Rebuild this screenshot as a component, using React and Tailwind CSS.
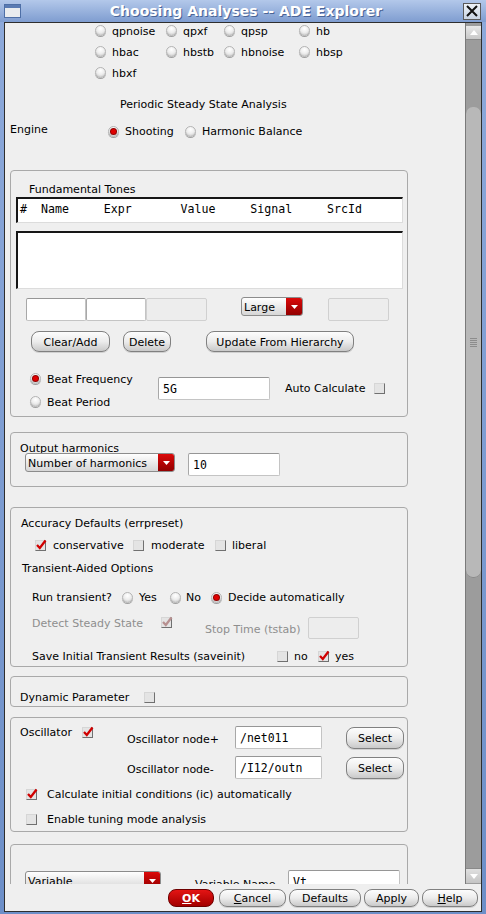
import React from 'react'

const mono = "font-['DejaVu_Sans_Mono',monospace]"
// labels sit a little low in the original toolkit
const lbl = 'pt-[3px]'

function Radio({ on }) {
  return (
    <span className="flex items-center justify-center w-[11px] h-[11px] shrink-0 rounded-full border border-[#b4b4b4] bg-[radial-gradient(circle_at_50%_30%,#ffffff_0%,#ededed_50%,#bcbcbc_100%)] shadow-[0_1px_0_#a0a0a0]">
      {on && <span className="w-[5px] h-[5px] rounded-full bg-[#e00000] shadow-[0_0_0_1px_#900000]" />}
    </span>
  )
}

function Check({ on, dim }) {
  return (
    <span className="relative flex w-[11px] h-[11px] shrink-0 border border-[#d6d6d6] border-b-[#707070] border-r-[#707070] bg-[#e4e4e4]">
      {on && (
        <svg viewBox="0 0 12 12" className="absolute -left-[1px] -top-[2px] w-[12px] h-[12px]">
          <path d="M2 6 L4.8 9 L10.5 1.5" fill="none" stroke={dim ? '#b79090' : '#d00000'} strokeWidth="2.3" />
        </svg>
      )}
    </span>
  )
}

function Btn({ className = '', children }) {
  return (
    <span className={`flex items-center justify-center shrink-0 rounded-[8px] border border-[#808080] bg-gradient-to-b from-[#fdfdfd] via-[#ececec] to-[#c9c9c9] shadow-[0_1px_0_#d0d0d0] ${className}`}>
      <span className={lbl}>{children}</span>
    </span>
  )
}

function Combo({ label, className = '' }) {
  return (
    <span className={`flex items-stretch shrink-0 h-[19px] rounded-[3px] border border-[#8c8c8c] overflow-hidden bg-gradient-to-b from-[#ffffff] to-[#d6d6d6] ${className}`}>
      <span className="flex-1 pl-[2px] pt-[2px] leading-[15px]">{label}</span>
      <span className="w-[16px] flex items-center justify-center bg-gradient-to-b from-[#dc0a0a] to-[#920000]">
        <svg width="7" height="4" viewBox="0 0 7 4"><path d="M0 0h7L3.5 4z" fill="#fff" /></svg>
      </span>
    </span>
  )
}

function Field({ value, className = '', disabled }) {
  return (
    <span
      className={`flex items-center shrink-0 rounded-[2px] border pl-[4px] pt-[3px] ${mono} text-[11.5px] ${
        disabled ? 'bg-[#ededed] border-[#d0d0d0]' : 'bg-white border-[#c4c4c4] border-t-[#969696] border-l-[#a8a8a8]'
      } ${className}`}
    >
      {value}
    </span>
  )
}

function Panel({ className = '', children }) {
  return (
    <div className={`ml-[5px] w-[398px] shrink-0 rounded-[4px] border border-[#a9a9a9] ${className}`}>
      {children}
    </div>
  )
}

const analyses = ['qpnoise', 'qpxf', 'qpsp', 'hb', 'hbac', 'hbstb', 'hbnoise', 'hbsp', 'hbxf']

function Scrollbar() {
  return (
    <div className="w-[16px] shrink-0 flex flex-col bg-[#9c9c9c] border-l border-[#7a7a7a]">
      <div className="mt-[3px] h-[14px] flex items-center justify-center bg-gradient-to-b from-[#e8e8e8] to-[#c8c8c8] border-b border-[#8a8a8a]">
        <svg width="8" height="5" viewBox="0 0 8 5"><path d="M4 0L8 5H0z" fill="#fff" /></svg>
      </div>
      <div className="mt-[67px] h-[471px] rounded-[7px] bg-[#b8b8b8] shadow-[inset_0_-1px_0_#8a8a8a] flex items-center justify-center">
        <div className="flex flex-col gap-[1px]">
          {[0, 1, 2, 3, 4].map((i) => (
            <span key={i} className="block w-[7px] h-px bg-[#8c8c8c]" />
          ))}
        </div>
      </div>
      <div className="mt-auto mb-[1px] h-[15px] flex items-center justify-center bg-gradient-to-b from-[#e0e0e0] to-[#c4c4c4] border-t border-[#8a8a8a]">
        <svg width="8" height="5" viewBox="0 0 8 5"><path d="M0 0H8L4 5z" fill="#fff" /></svg>
      </div>
    </div>
  )
}

export default function App() {
  return (
    <div className="w-[486px] h-[914px] flex flex-col bg-gradient-to-b from-[#8eaadb] to-[#6d8fc8] font-['DejaVu_Sans',sans-serif] text-[11px] text-black overflow-hidden">

      {/* ── Title bar ─────────────────────────────────────────── */}
      <div className="h-[22px] shrink-0 flex items-center bg-gradient-to-b from-[#b3c8ea] to-[#7f9dd0]">
        <div className="ml-[4px] w-[17px] h-[14px] flex flex-col border border-[#4e6fa6] bg-[#e9ecef]">
          <span className="h-[3px] bg-[#5a7bb3]" />
        </div>
        <div className="flex-1 text-center font-bold text-[14px] text-white [text-shadow:1px_1px_0_#4a6496] pl-[8px]">
          Choosing Analyses -- ADE Explorer
        </div>
        <div className="mr-[5px] w-[18px] h-[17px] flex items-center justify-center border border-[#5a5a5a] bg-gradient-to-b from-[#eef2f7] to-[#c9d4e3]">
          <svg width="12" height="12" viewBox="0 0 12 12">
            <path d="M1 1L11 11M11 1L1 11" stroke="#111" strokeWidth="2" />
          </svg>
        </div>
      </div>

      {/* ── Dialog body ───────────────────────────────────────── */}
      <div className="ml-[4px] w-[478px] h-[890px] flex flex-col border border-[#2e2e2e] bg-[#efefef]">
        <div className="h-[861px] flex">
          <div className="w-[460px] h-full overflow-hidden flex flex-col">

            {/* analyses list */}
            <div className="-mt-[3px] pl-[90px] grid grid-cols-[71px_58px_75px_60px] auto-rows-[21px]">
              {analyses.map((n) => (
                <div key={n} className="flex items-center gap-[6px]">
                  <Radio />
                  <span className={lbl}>{n}</span>
                </div>
              ))}
            </div>
            <div className="mt-[2px] h-px w-[410px] bg-[#a8a8a8]" />

            <div className="mt-[13px] pl-[115px] leading-[14px]">Periodic Steady State Analysis</div>

            <div className="mt-[8px] h-[18px] flex items-start">
              <span className="pl-[5px] pt-[2px] w-[103px] leading-[16px]">Engine</span>
              <div className="mt-[3px] h-[16px] flex items-center">
                <div className="w-[77px] flex items-center gap-[6px]">
                  <Radio on />
                  <span className={lbl}>Shooting</span>
                </div>
                <div className="flex items-center gap-[6px]">
                  <Radio />
                  <span className={lbl}>Harmonic Balance</span>
                </div>
              </div>
            </div>

            {/* Fundamental tones */}
            <Panel className="mt-[32px] h-[247px]">
              <div className="mt-[12px] pl-[18px] h-[14px] leading-[14px]">Fundamental Tones</div>
              <div className={`ml-[5px] w-[387px] h-[26px] bg-white border-t-2 border-l-2 border-[#161616] border-r border-b border-r-[#dcdcdc] border-b-[#dcdcdc] pl-[2px] pt-[3px] leading-[14px] ${mono} text-[11.6px] whitespace-pre`}>
                {'#  Name     Expr       Value     Signal     SrcId'}
              </div>
              <div className="mt-[8px] ml-[5px] w-[387px] h-[58px] bg-white border-t-2 border-l-2 border-[#161616] border-r border-b border-r-[#dcdcdc] border-b-[#dcdcdc]" />

              <div className="mt-[9px] ml-[15px] h-[23px] flex items-start">
                <Field className="w-[60px] h-[23px]" />
                <Field className="w-[60px] h-[23px]" />
                <Field className="w-[61px] h-[23px]" disabled />
                <Combo label="Large" className="ml-[34px] -mt-[1px] w-[62px]" />
                <Field className="ml-[25px] w-[61px] h-[23px]" disabled />
              </div>

              <div className="mt-[10px] h-[21px] flex">
                <Btn className="ml-[20px] w-[79px] h-[21px]">Clear/Add</Btn>
                <Btn className="ml-[13px] w-[48px] h-[21px]">Delete</Btn>
                <Btn className="ml-[35px] w-[148px] h-[21px]">Update From Hierarchy</Btn>
              </div>

              <div className="mt-[15px] flex items-start">
                <div className="w-[147px] pl-[19px] flex flex-col">
                  <div className="h-[23px] flex items-center gap-[6px]">
                    <Radio on />
                    <span className={lbl}>Beat Frequency</span>
                  </div>
                  <div className="h-[23px] flex items-center gap-[6px]">
                    <Radio />
                    <span className={lbl}>Beat Period</span>
                  </div>
                </div>
                <Field value="5G" className="mt-[10px] w-[112px] h-[23px]" />
                <div className="ml-[15px] mt-[14px] h-[14px] flex items-center">
                  <span className={`w-[89px] ${lbl}`}>Auto Calculate</span>
                  <Check />
                </div>
              </div>
            </Panel>

            {/* Output harmonics */}
            <Panel className="mt-[15px] h-[55px]">
              <div className="mt-[8px] pl-[9px] pt-[2px] h-[12px] leading-[12px]">Output harmonics</div>
              <div className="flex items-start">
                <Combo label="Number of harmonics" className="ml-[14px] w-[150px]" />
                <Field value="10" className="ml-[13px] w-[92px] h-[23px]" />
              </div>
            </Panel>

            {/* Accuracy */}
            <Panel className="mt-[20px] h-[160px]">
              <div className="mt-[9px] pl-[10px] leading-[14px]">Accuracy Defaults (errpreset)</div>
              <div className="mt-[7px] pl-[24px] h-[14px] flex items-center">
                <div className="w-[98px] flex items-center gap-[7px]"><Check on /><span className={lbl}>conservative</span></div>
                <div className="w-[82px] flex items-center gap-[7px]"><Check /><span className={lbl}>moderate</span></div>
                <div className="flex items-center gap-[6px]"><Check /><span className={lbl}>liberal</span></div>
              </div>
              <div className="mt-[10px] pl-[11px] leading-[14px]">Transient-Aided Options</div>
              <div className="mt-[14px] pl-[21px] h-[14px] flex items-center">
                <span className={`w-[90px] ${lbl}`}>Run transient?</span>
                <div className="w-[48px] flex items-center gap-[6px]"><Radio /><span className={lbl}>Yes</span></div>
                <div className="w-[41px] flex items-center gap-[5px]"><Radio /><span className={lbl}>No</span></div>
                <div className="flex items-center gap-[6px]"><Radio on /><span className={lbl}>Decide automatically</span></div>
              </div>
              <div className="mt-[11px] flex items-start text-[#8e8e8e]">
                <span className="pl-[21px] pt-[2px] w-[150px] leading-[14px]">Detect Steady State</span>
                <span className="mt-[2px]"><Check on dim /></span>
                <span className="ml-[33px] mt-[6px] pt-[2px] w-[103px] leading-[14px]">Stop Time (tstab)</span>
                <Field className="mt-[2px] w-[51px] h-[22px]" disabled />
              </div>
              <div className="mt-[10px] pl-[21px] h-[14px] flex items-center">
                <span className={`w-[245px] ${lbl}`}>Save Initial Transient Results (saveinit)</span>
                <div className="w-[41px] flex items-center gap-[6px]"><Check /><span className={lbl}>no</span></div>
                <div className="flex items-center gap-[6px]"><Check on /><span className={lbl}>yes</span></div>
              </div>
            </Panel>

            {/* Dynamic parameter */}
            <Panel className="mt-[9px] h-[31px]">
              <div className="mt-[13px] pl-[9px] h-[14px] flex items-center">
                <span className={`w-[124px] ${lbl}`}>Dynamic Parameter</span>
                <Check />
              </div>
            </Panel>

            {/* Oscillator */}
            <Panel className="mt-[10px] h-[115px]">
              <div className="flex items-start pl-[9px]">
                <div className="w-[107px] mt-[7px] h-[14px] flex items-center">
                  <span className={`w-[62px] ${lbl}`}>Oscillator</span>
                  <Check on />
                </div>
                <div className="flex flex-col">
                  <div className="mt-[8px] h-[23px] flex items-center">
                    <span className="w-[108px] pt-[5px]">Oscillator node+</span>
                    <Field value="/net011" className="w-[87px] h-[23px]" />
                    <Btn className="ml-[24px] mt-[1px] w-[58px] h-[22px]">Select</Btn>
                  </div>
                  <div className="mt-[7px] h-[23px] flex items-center">
                    <span className="w-[108px] pt-[5px]">Oscillator node-</span>
                    <Field value="/I12/outn" className="w-[87px] h-[23px]" />
                    <Btn className="ml-[24px] mt-[1px] w-[58px] h-[22px]">Select</Btn>
                  </div>
                </div>
              </div>
              <div className="mt-[8px] pl-[15px] h-[14px] flex items-center gap-[10px]">
                <Check on />
                <span className={lbl}>Calculate initial conditions (ic) automatically</span>
              </div>
              <div className="mt-[11px] pl-[15px] h-[14px] flex items-center gap-[10px]">
                <Check />
                <span className={lbl}>Enable tuning mode analysis</span>
              </div>
            </Panel>

            {/* Variable (clipped by the scroll view) */}
            <Panel className="mt-[12px] h-[60px]">
              <div className="mt-[26px] flex items-start">
                <Combo label="Variable" className="ml-[14px] w-[136px]" />
                <span className="ml-[34px] mt-[5px] pt-[2px] w-[93px] leading-[14px]">Variable Name</span>
                <Field value="Vt" className="-mt-[1px] w-[112px] h-[23px]" />
              </div>
            </Panel>
          </div>

          <Scrollbar />
        </div>

        {/* ── Dialog buttons ──────────────────────────────────── */}
        <div className="flex-1 flex justify-end items-start pt-[5px] pr-[3px]">
          <span className="flex items-center justify-center w-[46px] h-[18px] rounded-[8px] border border-[#6e0000] bg-gradient-to-b from-[#e41414] to-[#a30000] text-white font-bold">
            <span className="pt-[2px]"><span className="underline">O</span>K</span>
          </span>
          <Btn className="ml-[5px] w-[67px] h-[18px]"><span className="underline">C</span>ancel</Btn>
          <Btn className="ml-[3px] w-[72px] h-[18px]">Defaults</Btn>
          <Btn className="ml-[3px] w-[55px] h-[18px]">Apply</Btn>
          <Btn className="ml-[3px] w-[56px] h-[18px]"><span className="underline">H</span>elp</Btn>
        </div>
      </div>
    </div>
  )
}
